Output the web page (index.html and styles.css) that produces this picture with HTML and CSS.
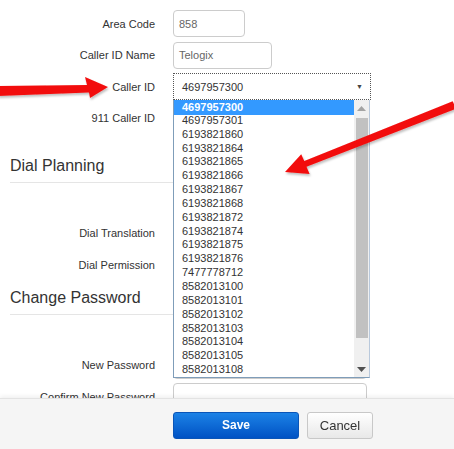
FILE: index.html
```html
<!DOCTYPE html>
<html>
<head>
<meta charset="utf-8">
<link rel="stylesheet" href="styles.css">
</head>
<body>
<div class="page">
  <div class="row"><label class="lbl">Area Code</label><div class="input w-area">858</div></div>
  <div class="row"><label class="lbl">Caller ID Name</label><div class="input w-name">Telogix</div></div>
  <div class="row"><label class="lbl">Caller ID</label>
    <div class="select"><span>4697957300</span><span class="caret">&#9660;</span></div>
  </div>
  <div class="row"><label class="lbl">911 Caller ID</label><div class="input w-wide"></div></div>

  <h2 class="section first">Dial Planning</h2>
  <div class="spacer"></div>
  <div class="row"><label class="lbl">Dial Translation</label><div class="input w-wide"></div></div>
  <div class="row"><label class="lbl">Dial Permission</label><div class="input w-wide"></div></div>

  <h2 class="section second">Change Password</h2>
  <div class="spacer"></div>
  <div class="row"><label class="lbl">New Password</label><div class="input w-wide"></div></div>
  <div class="row"><label class="lbl">Confirm New Password</label><div class="input w-confirm"></div></div>

  <div class="dropdown">
    <ul class="options">
      <li class="sel">4697957300</li>
      <li>4697957301</li>
      <li>6193821860</li>
      <li>6193821864</li>
      <li>6193821865</li>
      <li>6193821866</li>
      <li>6193821867</li>
      <li>6193821868</li>
      <li>6193821872</li>
      <li>6193821874</li>
      <li>6193821875</li>
      <li>6193821876</li>
      <li>7477778712</li>
      <li>8582013100</li>
      <li>8582013101</li>
      <li>8582013102</li>
      <li>8582013103</li>
      <li>8582013104</li>
      <li>8582013105</li>
      <li>8582013108</li>
    </ul>
    <div class="scrollbar">
      <div class="sb-btn"><svg width="9" height="5" viewBox="0 0 9 5"><path d="M0 5 L4.5 0 L9 5 Z" fill="#a3a3a3"/></svg></div>
      <div class="sb-track"><div class="sb-thumb"></div></div>
      <div class="sb-btn"><svg width="9" height="5" viewBox="0 0 9 5"><path d="M0 0 L4.5 5 L9 0 Z" fill="#505050"/></svg></div>
    </div>
  </div>

  <svg class="arrows" width="454" height="449" viewBox="0 0 454 449">
    <defs>
      <filter id="sh" x="-10%" y="-20%" width="120%" height="160%">
        <feDropShadow dx="1" dy="2" stdDeviation="1.2" flood-color="#000" flood-opacity="0.25"/>
      </filter>
    </defs>
    <polygon filter="url(#sh)" fill="#f20d0d" points="-2,86 87,85 85,77 108,87 90,98 89,92.5 -2,96"/>
    <polygon filter="url(#sh)" fill="#f20d0d" points="452.7,101.2 304.3,161.1 301.2,154.2 285,172 309.6,174 306.5,166.7 456,108.8"/>
  </svg>
</div>

<div class="footer">
  <button class="btn primary">Save</button>
  <button class="btn default">Cancel</button>
</div>
</body>
</html>
```

FILE: styles.css
```css
html, body {
  margin: 0;
  padding: 0;
  background: #fff;
  font-family: "Liberation Sans", Arial, sans-serif;
  color: #333;
  overflow: hidden;
}

.page {
  position: relative;
  height: 449px;
  padding: 10px 0 0 0;
  box-sizing: border-box;
}

.row {
  display: grid;
  grid-template-columns: 155px auto;
  column-gap: 18px;
  align-items: center;
  height: 27px;
  margin-bottom: 4.6px;
}

.lbl {
  text-align: right;
  font-size: 11px;
  color: #333;
  white-space: nowrap;
}

.input {
  box-sizing: border-box;
  height: 27px;
  border: 1px solid #ccc;
  border-radius: 4px;
  font-size: 11px;
  color: #666;
  padding-left: 5px;
  display: flex;
  align-items: center;
  background: #fff;
}
.w-area { width: 72px; }
.w-name { width: 99px; }
.w-wide { width: 194px; }
.w-confirm { width: 194px; }

.select {
  box-sizing: border-box;
  width: 198px;
  height: 27px;
  border: 1px dotted #555;
  display: flex;
  align-items: center;
  justify-content: space-between;
  padding: 0 7px 0 8px;
  font-size: 11px;
  color: #333;
  background: #fff;
}
.caret {
  font-size: 7px;
  color: #444;
}

.section {
  font-weight: normal;
  font-size: 16px;
  line-height: 18px;
  margin: 0 84px 0 10px;
  padding-bottom: 7px;
  border-bottom: 1px solid #e5e5e5;
  color: #333;
}
.section.first { margin-top: 25px; }
.section.second { margin-top: 10.5px; }

.spacer { height: 37px; }

.dropdown {
  position: absolute;
  left: 173px;
  top: 100px;
  width: 197px;
  height: 278px;
  box-sizing: border-box;
  border-left: 1px solid #7f9db9;
  border-bottom: 1px solid #7f9db9;
  border-right: 1px solid #b9c9dc;
  background: #fff;
  display: flex;
  z-index: 2;
}

.options {
  list-style: none;
  margin: 0;
  padding: 0;
  flex: 1;
}
.options li {
  height: 13.85px;
  line-height: 13.85px;
  font-size: 11px;
  color: #333;
  padding-left: 8px;
}
.options li.sel {
  background: #3399ff;
  color: #fff;
  font-weight: bold;
  height: 15px;
  line-height: 14px;
  margin-bottom: -1.15px;
}

.scrollbar {
  width: 15px;
  display: flex;
  flex-direction: column;
  background: #f0f0f0;
}
.sb-btn {
  height: 16px;
  display: flex;
  align-items: center;
  justify-content: center;
}
.sb-track {
  flex: 1;
  padding: 2px 1px 0 2px;
}
.sb-thumb {
  height: 220px;
  background: #c1c1c1;
}

.arrows {
  position: absolute;
  left: 0;
  top: 0;
  z-index: 3;
  pointer-events: none;
}

.footer {
  position: fixed;
  left: 0;
  right: 0;
  bottom: 0;
  height: 51px;
  background: #f5f5f5;
  border-top: 1px solid #e3e3e3;
  box-shadow: 0 -2px 4px rgba(0,0,0,0.06);
  display: flex;
  align-items: center;
  gap: 8px;
  padding-left: 173px;
  padding-top: 2px;
  box-sizing: border-box;
  z-index: 4;
}

.btn {
  height: 27px;
  border-radius: 3px;
  font-family: "Liberation Sans", Arial, sans-serif;
  cursor: pointer;
}
.btn.primary {
  width: 126px;
  background: linear-gradient(#1c82e6, #0052c4);
  border: 1px solid #0a55b8;
  color: #fff;
  font-weight: bold;
  font-size: 12px;
}
.btn.default {
  width: 66px;
  background: linear-gradient(#ffffff, #e8e8e8);
  border: 1px solid #c8c8c8;
  color: #333;
  font-size: 13px;
}
```
